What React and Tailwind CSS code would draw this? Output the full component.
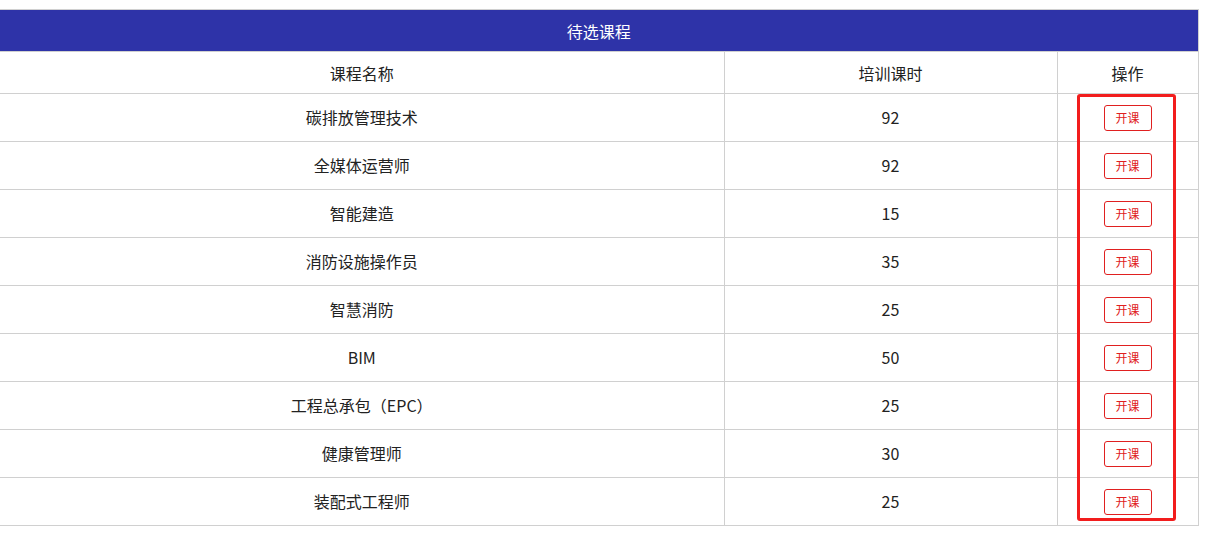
import React from 'react';

const courses = [
  { name: '碳排放管理技术', hours: 92 },
  { name: '全媒体运营师', hours: 92 },
  { name: '智能建造', hours: 15 },
  { name: '消防设施操作员', hours: 35 },
  { name: '智慧消防', hours: 25 },
  { name: 'BIM', hours: 50 },
  { name: '工程总承包（EPC）', hours: 25 },
  { name: '健康管理师', hours: 30 },
  { name: '装配式工程师', hours: 25 },
];

const App = () => {
  return (
    <div
      className="w-[1210px] h-[545px] bg-white pt-[9px] text-[#222]"
      style={{ fontFamily: '"Microsoft YaHei", "Noto Sans CJK SC", sans-serif' }}
    >
      <div className="relative w-[1198px]">
        <table className="w-full border-collapse table-fixed text-[16px]">
          <colgroup>
            <col className="w-[724px]" />
            <col className="w-[333px]" />
            <col className="w-[141px]" />
          </colgroup>
          <thead>
            <tr>
              <th
                colSpan={3}
                className="h-[42px] bg-[#2e33a8] text-white font-normal border border-[#d0d0d0] border-l-0"
              >
                待选课程
              </th>
            </tr>
            <tr>
              <th className="h-[42px] font-normal border border-[#d0d0d0] border-l-0">课程名称</th>
              <th className="font-normal border border-[#d0d0d0]">培训课时</th>
              <th className="font-normal border border-[#d0d0d0]">操作</th>
            </tr>
          </thead>
          <tbody>
            {courses.map((c, i) => (
              <tr key={i}>
                <td className="h-[48px] text-center border border-[#d0d0d0] border-l-0 pb-[2px]">{c.name}</td>
                <td className="text-center border border-[#d0d0d0] pb-[2px]">{c.hours}</td>
                <td className="border border-[#d0d0d0]">
                  <div className="flex justify-center">
                    <button className="w-[48px] h-[26px] border border-[#e02020] rounded-[3px] text-[12px] text-[#e02020] bg-white leading-none">
                      开课
                    </button>
                  </div>
                </td>
              </tr>
            ))}
          </tbody>
        </table>
        {/* red highlight annotation */}
        <div className="absolute left-[1077px] top-[85px] w-[99px] h-[427px] border-[3px] border-[#f21d1d] rounded-[3px] pointer-events-none" />
      </div>
    </div>
  );
};

export default App;
